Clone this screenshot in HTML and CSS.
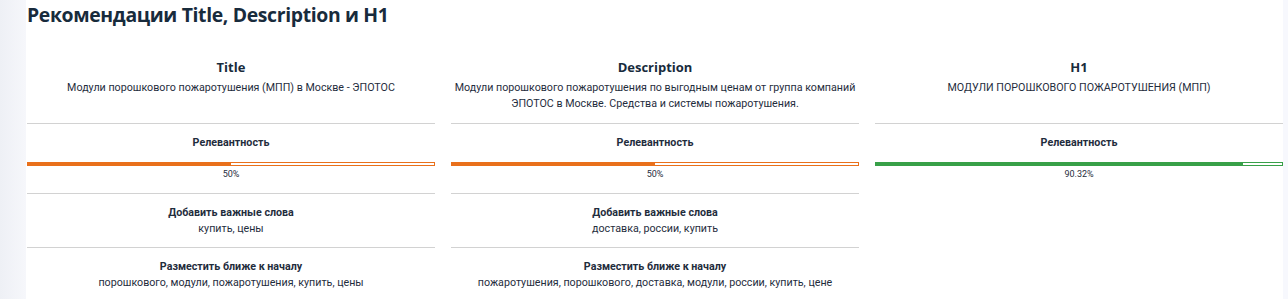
FILE: index.html
```html
<!DOCTYPE html>
<html lang="ru">
<head>
    <meta charset="UTF-8">
    <title>Рекомендации Title, Description и H1</title>
    <link rel="stylesheet" href="styles.css">
</head>
<body>
    <div class="side"></div>
    <div class="page">
        <h1>Рекомендации Title, Description и H1</h1>
        <div class="columns">
            <div class="column">
                <div class="col-head">
                    <h2>Title</h2>
                    <p>Модули порошкового пожаротушения (МПП) в Москве - ЭПОТОС</p>
                </div>
                <div class="section">
                    <div class="label">Релевантность</div>
                    <div class="bar orange"><div class="fill" style="width: 50%"></div></div>
                    <div class="percent">50%</div>
                </div>
                <div class="section">
                    <div class="label">Добавить важные слова</div>
                    <div class="value">купить, цены</div>
                </div>
                <div class="section">
                    <div class="label">Разместить ближе к началу</div>
                    <div class="value">порошкового, модули, пожаротушения, купить, цены</div>
                </div>
            </div>
            <div class="column">
                <div class="col-head">
                    <h2>Description</h2>
                    <p>Модули порошкового пожаротушения по выгодным ценам от группа компаний ЭПОТОС в Москве. Средства и системы пожаротушения.</p>
                </div>
                <div class="section">
                    <div class="label">Релевантность</div>
                    <div class="bar orange"><div class="fill" style="width: 50%"></div></div>
                    <div class="percent">50%</div>
                </div>
                <div class="section">
                    <div class="label">Добавить важные слова</div>
                    <div class="value">доставка, россии, купить</div>
                </div>
                <div class="section">
                    <div class="label">Разместить ближе к началу</div>
                    <div class="value">пожаротушения, порошкового, доставка, модули, россии, купить, цене</div>
                </div>
            </div>
            <div class="column">
                <div class="col-head">
                    <h2>H1</h2>
                    <p>МОДУЛИ ПОРОШКОВОГО ПОЖАРОТУШЕНИЯ (МПП)</p>
                </div>
                <div class="section">
                    <div class="label">Релевантность</div>
                    <div class="bar green"><div class="fill" style="width: 90.32%"></div></div>
                    <div class="percent">90.32%</div>
                </div>
            </div>
        </div>
    </div>
</body>
</html>
```

FILE: styles.css
```css
html {
    background-color: #f7f8fd;
}
body {
    margin: 0;
    display: flex;
    font-family: Roboto, "Liberation Sans", sans-serif;
    font-size: 10.7px;
    color: #1f2d3d;
}
.side {
    width: 26px;
    flex-shrink: 0;
    min-height: 299px;
    background: linear-gradient(to right, #eef0f5, #f6f7fb);
}
.page {
    width: 1257px;
    background-color: #fff;
    padding: 2px 1px 0;
    box-sizing: border-box;
}
h1 {
    margin: 0 0 29px;
    font-family: "Open Sans", sans-serif;
    font-size: 19.4px;
    letter-spacing: -0.35px;
    line-height: 26px;
    font-weight: 700;
    color: #182b3c;
}
.columns {
    display: grid;
    grid-template-columns: repeat(3, 408px);
    gap: 16px;
}
.column {
    text-align: center;
}
.col-head {
    height: 66px;
}
h2 {
    margin: 0 0 3px;
    font-family: "Open Sans", sans-serif;
    font-size: 13px;
    line-height: 20px;
    font-weight: 700;
    color: #182b3c;
}
.col-head p {
    margin: 0;
    line-height: 16px;
}
.section {
    border-top: 1px solid #d2d2d2;
    padding: 11px 0 10px;
    line-height: 16px;
}
.label {
    font-weight: 700;
}
.bar {
    height: 4px;
    margin-top: 11px;
    border: 1px solid;
    box-sizing: border-box;
    background-color: #fff;
}
.bar .fill {
    height: 100%;
}
.orange {
    border-color: #e9701b;
}
.orange .fill {
    background-color: #e9701b;
}
.green {
    border-color: #38a048;
}
.green .fill {
    background-color: #38a048;
}
.percent {
    font-size: 9px;
    line-height: 14px;
    margin-top: 1px;
    margin-bottom: 2px;
}
```
